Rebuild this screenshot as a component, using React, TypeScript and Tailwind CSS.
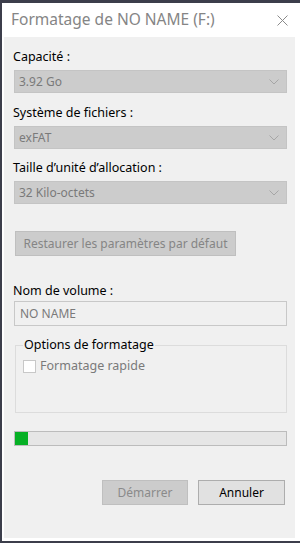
import React from 'react';

const font = { fontFamily: '"Noto Sans", "Open Sans", sans-serif' };

const Chevron: React.FC = () => (
  <svg width="10" height="6" viewBox="0 0 10 6" className="shrink-0">
    <path d="M0.5 0.5 L5 5 L9.5 0.5" fill="none" stroke="#a6a6a6" strokeWidth="1" />
  </svg>
);

const Combo: React.FC<{ value: string }> = ({ value }) => (
  <div className="h-[23px] w-[273px] bg-[#cccccc] border border-[#c4c4c4] flex items-center justify-between pl-[4px] pr-[7px]">
    <span className="text-[12px] text-[#7a7a7a] leading-none">{value}</span>
    <Chevron />
  </div>
);

const Label: React.FC<{ children: React.ReactNode }> = ({ children }) => (
  <div className="text-[12.5px] leading-[16px] text-black -ml-[1px]">{children}</div>
);

const App: React.FC = () => {
  return (
    <div className="w-[300px] h-[543px] bg-[#3c3e4b] flex flex-col pt-[3px] pl-[2px] pb-[2px]" style={font}>
      <div className="flex-1 bg-white flex flex-col">
        {/* title bar */}
        <div className="h-[34px] flex items-center justify-between pl-[9px] pr-[12px]">
          <span className="text-[15.5px] text-[#858585] leading-none">Formatage de NO NAME (F:)</span>
          <svg width="11" height="11" viewBox="0 0 11 11">
            <path d="M0.5 0.5 L10.5 10.5 M10.5 0.5 L0.5 10.5" stroke="#8a8a8a" strokeWidth="1" />
          </svg>
        </div>

        {/* client area */}
        <div className="flex-1 bg-[#f0f0f0] ml-[2px] mr-[5px] mb-[3px] pl-[10px] pt-[12px] flex flex-col">
          <Label>Capacité :</Label>
          <div className="mt-[5px]">
            <Combo value="3.92 Go" />
          </div>

          <div className="mt-[12px]">
            <Label>Système de fichiers :</Label>
          </div>
          <div className="mt-[5px]">
            <Combo value="exFAT" />
          </div>

          <div className="mt-[11px]">
            <Label>Taille d’unité d’allocation :</Label>
          </div>
          <div className="mt-[5px]">
            <Combo value="32 Kilo-octets" />
          </div>

          <div className="mt-[27px] ml-[1px]">
            <div className="h-[25px] w-[221px] bg-[#cccccc] border border-[#bfbfbf] flex items-center justify-center">
              <span className="text-[12px] text-[#858585] leading-none">Restaurer les paramètres par défaut</span>
            </div>
          </div>

          <div className="mt-[27px]">
            <Label>Nom de volume :</Label>
          </div>
          <div className="mt-[2px] h-[25px] w-[273px] bg-[#f0f0f0] border border-[#c8c8c8] flex items-center pl-[5px]">
            <span className="text-[12px] text-[#7a7a7a] leading-none">NO NAME</span>
          </div>

          {/* group box */}
          <div className="relative mt-[19px] ml-[1px] h-[68px] w-[272px] border border-[#dcdcdc]">
            <span className="absolute -top-[9px] left-[7px] bg-[#f0f0f0] px-[1px] text-[12.5px] leading-[16px] text-black">
              Options de formatage
            </span>
            <div className="flex items-center gap-[4px] mt-[14px] ml-[7px]">
              <div className="w-[13px] h-[13px] bg-white border border-[#c8c8c8]" />
              <span className="text-[12.5px] text-[#7a7a7a] leading-none">Formatage rapide</span>
            </div>
          </div>

          {/* progress */}
          <div className="mt-[18px] h-[15px] w-[273px] bg-[#e6e6e6] border border-[#bcbcbc] flex">
            <div className="h-full w-[13px] bg-[#06b025]" />
          </div>

          {/* buttons */}
          <div className="mt-[34px] flex gap-[10px] pl-[88px]">
            <div className="h-[25px] w-[86px] bg-[#cccccc] border border-[#bfbfbf] flex items-center justify-center">
              <span className="text-[12px] text-[#8a8a8a] leading-none">Démarrer</span>
            </div>
            <div className="h-[25px] w-[87px] bg-[#e1e1e1] border border-[#adadad] flex items-center justify-center">
              <span className="text-[12px] text-black leading-none">Annuler</span>
            </div>
          </div>
        </div>
      </div>
    </div>
  );
};

export default App;
